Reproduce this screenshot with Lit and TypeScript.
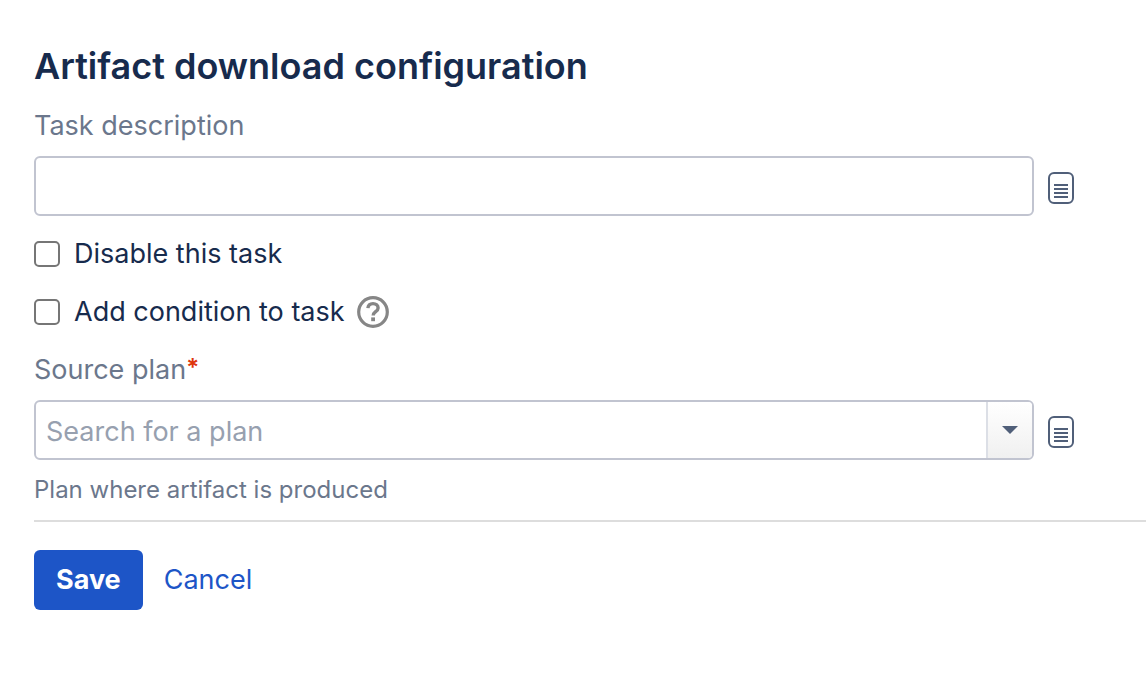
import { LitElement, html, css, svg } from "lit";
import { customElement } from "lit/decorators.js";

const variablesIcon = html`<svg width="26" height="32" viewBox="0 0 26 32" aria-hidden="true">
  ${svg`<rect x="1" y="1" width="24" height="30" rx="5" fill="none" stroke="#505f79" stroke-width="2"/>
  <path d="M6 13h14M6 17h14M6 21h14M6 25h14" stroke="#505f79" stroke-width="2"/>`}
</svg>`;

const helpIcon = html`<svg width="32" height="32" viewBox="0 0 32 32" aria-hidden="true">
  <circle cx="16" cy="16" r="14.3" fill="none" stroke="#868686" stroke-width="3.2"/>
  <path d="M10.9 12.2c.3-3.2 2.3-4.6 5.1-4.6 3 0 5.1 1.7 5.1 4.3 0 3.7-4.9 3.9-4.9 7.6" fill="none" stroke="#868686" stroke-width="3.4"/>
  <rect x="14.2" y="21.4" width="3.8" height="3.8" fill="#868686"/>
</svg>`;

@customElement("app-root")
export class AppRoot extends LitElement {
  static styles = css`
    :host {
      display: block;
      background: #fff;
      color: #172b4d;
      font: 400 27px/40px Inter, "Liberation Sans", sans-serif;
    }
    * {
      box-sizing: border-box;
    }
    form {
      padding: 44px 0 44px 34px;
    }
    h2 {
      margin: 0 0 18px;
      font-size: 36px;
      line-height: 44px;
      font-weight: 600;
    }
    button,
    input {
      font: inherit;
      color: inherit;
      margin: 0;
    }
    .label {
      display: block;
      color: #6b778c;
      margin-bottom: 10px;
    }
    .required {
      color: #de350b;
      font-size: 24px;
      font-weight: 600;
      line-height: 36px;
      vertical-align: top;
    }
    .row {
      display: flex;
      align-items: center;
      gap: 14px;
      padding-right: 72px;
    }
    .field {
      flex: 1;
      min-width: 0;
      height: 60px;
      border: 2px solid #c1c4d0;
      border-radius: 6px;
      background: #fff;
      padding: 0 10px;
    }
    .combo {
      display: flex;
      padding: 0;
      overflow: hidden;
    }
    .search {
      flex: 1;
      min-width: 0;
      border: 0;
      background: none;
      padding: 4px 10px 0;
    }
    .search::placeholder {
      color: #97a0af;
      opacity: 1;
    }
    .arrow {
      width: 46px;
      border: 0;
      border-left: 2px solid #dcdfe6;
      background: linear-gradient(#fff, #f0f0f0);
      padding: 0;
      display: flex;
      align-items: center;
      justify-content: center;
    }
    .icon {
      border: 0;
      padding: 4px 0 0;
      background: none;
      display: flex;
    }
    .check {
      display: flex;
      align-items: center;
      margin-top: 18px;
    }
    .check label {
      padding-left: 14px;
    }
    .check input {
      appearance: none;
      width: 26px;
      height: 26px;
      border: 2px solid #767676;
      border-radius: 5px;
      background: #fff;
    }
    .help {
      padding: 0;
      margin-left: 12px;
    }
    .source {
      margin-top: 18px;
    }
    .hint {
      margin: 14px 0;
      font-size: 24px;
      line-height: 32px;
      color: #6b778c;
    }
    .actions {
      display: flex;
      align-items: center;
      gap: 21px;
      border-top: 2px solid #dddddd;
      padding-top: 28px;
    }
    .save {
      height: 60px;
      padding: 0 22px;
      border: 0;
      border-radius: 6px;
      background: #1d55c7;
      color: #fff;
      font-weight: 700;
    }
    a {
      color: #1d55c7;
      text-decoration: none;
    }
  `;

  render() {
    return html`
      <form @submit=${(e: Event) => e.preventDefault()}>
        <h2>Artifact download configuration</h2>
        <label class="label" for="description">Task description</label>
        <div class="row">
          <input class="field" id="description" type="text" />
          <button class="icon" type="button" aria-label="Insert variable">${variablesIcon}</button>
        </div>
        <div class="check">
          <input id="disable" type="checkbox" /><label for="disable">Disable this task</label>
        </div>
        <div class="check">
          <input id="condition" type="checkbox" /><label for="condition">Add condition to task</label>
          <button class="icon help" type="button" aria-label="Help">${helpIcon}</button>
        </div>
        <div class="source">
          <label class="label" for="plan">Source plan<span class="required">*</span></label>
          <div class="row">
            <div class="field combo">
              <input class="search" id="plan" type="text" role="combobox" aria-expanded="false" placeholder="Search for a plan" />
              <button class="arrow" type="button" aria-label="Show plans">
                <svg width="16" height="8" viewBox="0 0 16 8" aria-hidden="true"><path d="M0 0h16L8 8z" fill="#505f79"/></svg>
              </button>
            </div>
            <button class="icon" type="button" aria-label="Insert variable">${variablesIcon}</button>
          </div>
          <p class="hint">Plan where artifact is produced</p>
        </div>
        <div class="actions">
          <button class="save" type="submit">Save</button>
          <a href="#">Cancel</a>
        </div>
      </form>
    `;
  }
}
